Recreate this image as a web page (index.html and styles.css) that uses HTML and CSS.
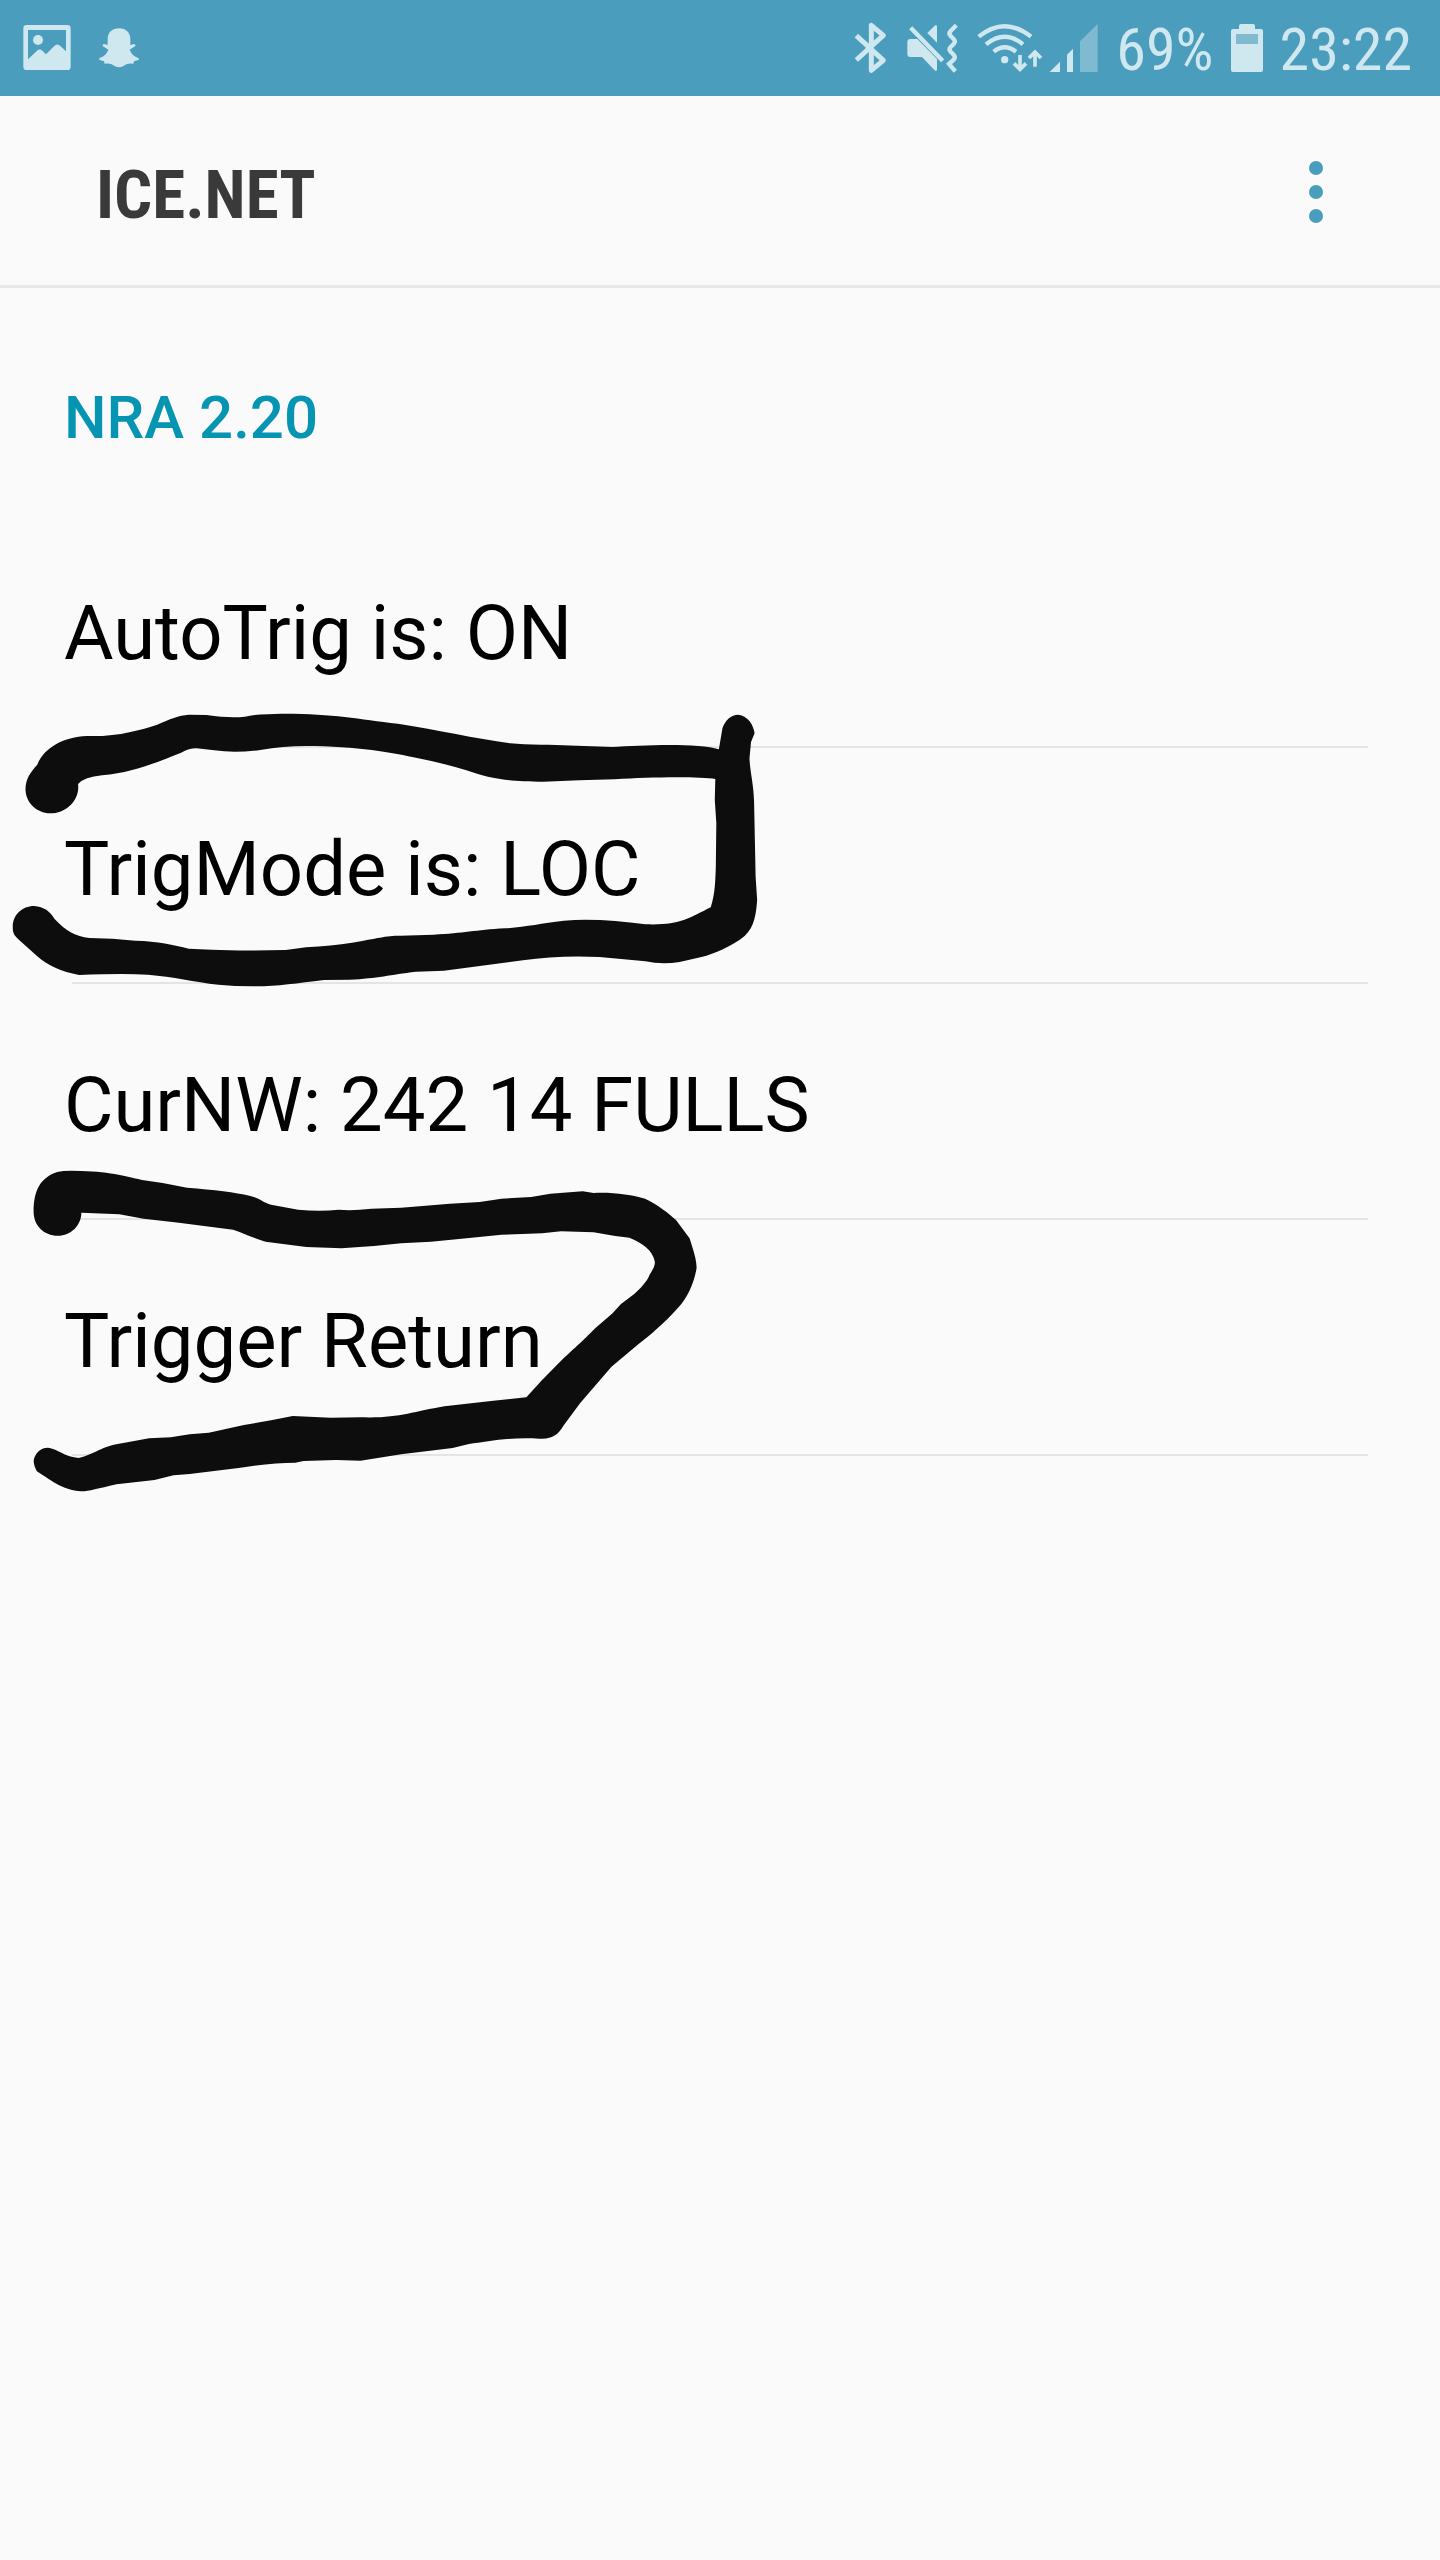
FILE: index.html
```html
<!DOCTYPE html>
<html lang="en">
<head>
<meta charset="utf-8">
<meta name="viewport" content="width=device-width, initial-scale=1">
<title>ICE.NET</title>
<link rel="stylesheet" href="styles.css">
</head>
<body>
<div class="status-bar">
  <div class="status-group notifications">
    <svg class="icon" width="48" height="56" viewBox="69 60 144 168" aria-hidden="true">
      <path fill-rule="evenodd" d="M80 75H202Q212 75 212 85V200Q212 210 202 210H80Q70 210 70 200V85Q70 75 80 75ZM84 90V178L111 152Q119 145 127 152L138 163L163 138Q172 129 181 138L198 154V90Z"/>
      <circle cx="114" cy="120" r="15"/>
    </svg>
    <svg class="icon" width="42" height="56" viewBox="294 60 126 168" aria-hidden="true">
      <path d="M357 85C378 85 391 98 391 118V135L402 132Q408 133 406 138L389 149C394 162 402 170 415 174Q419 178 415 180L402 184L400 191Q388 189 379 193C370 199 365 202 357 202C349 202 344 199 335 193Q326 189 314 191L312 184L299 180Q295 178 299 174C312 170 320 162 325 149L308 138Q306 133 312 132L323 135V118C323 98 336 85 357 85Z"/>
    </svg>
  </div>
  <div class="status-group">
    <svg class="icon" width="35" height="56" viewBox="39 60 105 168" aria-hidden="true">
      <path class="line bluetooth" d="M46 107L127 181L91 211V76L127 106L46 180"/>
    </svg>
    <svg class="icon" width="54" height="56" viewBox="198 60 162 168" aria-hidden="true">
      <path d="M232 117H211Q202 117 202 126V162Q202 171 211 171H246L283 210Q291 216 291 208V177Z"/>
      <path d="M262 99L284 77Q291 72 291 80V128Z"/>
      <path class="line slash" d="M212 83L308 182"/>
      <path class="line wave" d="M349 76L332 93Q325 101 332 108L341 117Q348 124 341 132L332 141Q325 148 332 155L341 164Q348 172 341 179L327 192L346 214"/>
    </svg>
    <div class="network">
      <svg class="icon" width="66" height="56" viewBox="414 60 198 168" aria-hidden="true">
        <path class="line wifi" d="M419 110Q497 47 576 110M441 133Q497 87 552 133M464 155Q497 129 531 155"/>
        <circle cx="497" cy="179" r="11"/>
        <path class="line arrow" d="M543 165V207M525 190L543 208L561 190M588 200V157M570 174L588 156L606 174"/>
      </svg>
      <svg class="icon" width="50" height="56" viewBox="630 60 150 168" aria-hidden="true">
        <path d="M632 216L663 185V216ZM684 216V164L702 146V216Z"/>
        <path class="dim" d="M723 216V124L776 72V216Z"/>
      </svg>
    </div>
    <span class="status-text">69%</span>
    <svg class="icon" width="32" height="56" viewBox="393 60 96 168" aria-hidden="true">
      <path fill-rule="evenodd" d="M417 87V78Q417 72 423 72H459Q465 72 465 78V87H483Q489 87 489 93V210Q489 216 483 216H399Q393 216 393 210V93Q393 87 399 87ZM408 102V132H474V102Z"/>
      <path class="dim" d="M408 102H474V132H408Z"/>
    </svg>
    <time class="status-text">23:22</time>
  </div>
</div>
<header class="app-bar">
  <h1 class="app-title">ICE.NET</h1>
  <button class="menu-button" type="button" aria-label="More options">
    <svg width="16" height="64" viewBox="0 0 16 64" aria-hidden="true">
      <circle cx="8" cy="8" r="7"/><circle cx="8" cy="32" r="7"/><circle cx="8" cy="56" r="7"/>
    </svg>
  </button>
</header>
<main class="content">
  <h2 class="section-title">NRA 2.20</h2>
  <ul class="options">
    <li class="option"><button class="option-button" type="button">AutoTrig is: ON</button></li>
    <li class="option"><button class="option-button" type="button">TrigMode is: LOC</button></li>
    <li class="option"><button class="option-button" type="button">CurNW: 242 14 FULLS</button></li>
    <li class="option"><button class="option-button" type="button">Trigger Return</button></li>
  </ul>
  <svg class="marker marker-mode" width="800" height="320" viewBox="0 0 1568 960" preserveAspectRatio="none" aria-hidden="true">
    <path d="M98 370C72 370 50 338 50 298C50 265 61 245 73 224C87 172 125 141 170 138C230 141 275 120 308 104C333 87 350 76 370 74L405 75Q450 85 480 80C500 72 530 73 550 71C650 70 700 87 780 101C860 120 930 145 1000 160Q1030 165 1075 164L1200 171C1260 165 1370 158 1409 178L1416 115C1421 91 1433 74 1447 74C1466 77 1477 105 1479 130L1472 156L1469 205C1470 245 1477 280 1478 335L1481 560L1484 630C1482 670 1479 710 1460 737C1435 770 1395 793 1377 800L1332 816Q1297 824 1265 814L1175 801C1120 797 1070 801 1025 811L870 842L815 845C765 854 740 865 685 869L635 870C580 880 540 890 495 889Q460 889 428 884C380 876 340 860 290 854Q240 850 155 855C120 846 93 825 73 799L37 749C27 735 25 728 25 710C25 675 43 648 67 648C86 650 98 664 107 687C130 725 148 738 175 744Q220 744 265 752C310 754 340 764 370 776L415 779Q470 783 560 780L600 772Q650 767 690 758C740 745 755 737 785 737L850 734C910 730 930 720 990 715C1030 711 1060 700 1105 692C1160 685 1210 693 1265 703C1330 707 1350 685 1393 652C1402 610 1402 570 1403 530L1404 400L1401 330L1402 267C1375 260 1280 260 1205 268L1135 271L1065 275C1000 275 965 265 935 251C895 231 860 217 820 205C770 188 700 168 600 168Q555 168 510 180Q460 190 420 181L385 175Q370 175 355 188C300 222 260 247 200 256Q165 261 153 282C157 330 130 370 98 370Z"/>
  </svg>
  <svg class="marker marker-return" width="850" height="520" viewBox="0 0 1568 1560" preserveAspectRatio="none" aria-hidden="true">
    <path d="M107 707C80 707 62 675 62 635C62 570 75 532 106 516Q120 510 150 513C205 515 240 532 265 541L300 549L345 563C395 569 435 577 460 587C480 595 485 608 500 614L550 629Q590 635 625 629Q650 633 685 626L740 623L830 611L885 606L925 596L980 591L1015 581L1075 574L1095 579C1130 576 1165 585 1190 596C1212 612 1235 642 1247 660L1272 715C1280 755 1285 780 1285 805C1280 850 1268 895 1250 925C1225 970 1200 1005 1178 1032L1128 1100L1070 1210L1040 1276C1030 1305 1017 1319 995 1316C940 1310 900 1325 865 1332L835 1344L740 1363L665 1382L620 1380L560 1383L545 1388Q500 1388 440 1404L350 1422L320 1426L285 1440L215 1453C180 1466 165 1474 150 1474C115 1472 90 1436 68 1414Q60 1390 63 1375C67 1356 76 1343 88 1343C107 1347 115 1367 145 1374C175 1363 185 1338 230 1328L275 1315L315 1312L350 1303L385 1298L450 1275L500 1261L540 1248L610 1253L665 1252C735 1256 760 1235 820 1219L910 1202L971 1192L1000 1140L1035 1082C1070 1030 1080 1015 1098 985L1130 940L1145 913L1170 882C1190 853 1196 835 1198 825Q1209 798 1208 785C1204 750 1184 728 1161 713L1135 708L1095 697L1035 694L1000 700L925 704L870 713L795 725L740 730L690 738L630 745L565 741L490 725C465 713 450 699 430 689L380 679L330 668L265 656L220 643L150 638C150 677 130 707 107 707Z"/>
  </svg>
</main>
</body>
</html>
```
FILE: styles.css
```css
* {
  box-sizing: border-box;
}

body {
  margin: 0;
  min-height: 100vh;
  background: #fafafa;
  color: #000;
  font-family: Roboto, "Liberation Sans", sans-serif;
}

.status-bar {
  display: flex;
  align-items: center;
  justify-content: space-between;
  height: 96px;
  padding: 0 28px 0 23px;
  background: #4a9dbd;
  color: #cfe7ef;
}

.status-group,
.network {
  display: flex;
  align-items: center;
  gap: 17px;
}

.notifications {
  gap: 27px;
}

.network {
  gap: 6px;
}

.icon {
  display: block;
  flex: none;
  fill: currentColor;
}

.line {
  fill: none;
  stroke: currentColor;
}

.bluetooth {
  stroke-width: 15;
  stroke-linejoin: round;
}

.slash,
.wave,
.wifi {
  stroke-width: 13;
}

.arrow {
  stroke-width: 11;
}

.dim {
  opacity: 0.4;
}

.status-text {
  padding-top: 4px;
  font-family: "Roboto Condensed", "Liberation Sans Narrow", Roboto, sans-serif;
  font-size: 60px;
  line-height: 92px;
}

.app-bar {
  display: flex;
  align-items: center;
  justify-content: space-between;
  height: 192px;
  padding: 2px 84px 0 96px;
  border-bottom: 3px solid #e8e8e8;
}

.app-title {
  margin: 0;
  padding-top: 6px;
  color: #3a3a3a;
  font-family: "Roboto Condensed", "Liberation Sans Narrow", Roboto, sans-serif;
  font-size: 67px;
  font-weight: 700;
  line-height: 80px;
}

.menu-button {
  display: flex;
  align-items: center;
  justify-content: center;
  width: 80px;
  height: 96px;
  padding: 0;
  border: 0;
  background: none;
  fill: #4a9dbd;
}

.content {
  position: relative;
  padding-top: 92px;
}

.section-title {
  margin: 0 64px 56px;
  color: #0595b2;
  font-size: 60px;
  font-weight: 500;
  line-height: 76px;
}

.options {
  margin: 0;
  padding: 0;
  list-style: none;
}

.option {
  padding: 0 72px 0 64px;
}

.option-button {
  display: block;
  width: 100%;
  height: 236px;
  padding: 6px 0 0;
  border: 0;
  background: linear-gradient(#e4e4e4, #e4e4e4) 8px 100% / 100% 2px no-repeat;
  color: inherit;
  font: inherit;
  font-size: 76px;
  line-height: 90px;
  text-align: left;
}

.marker {
  position: absolute;
  left: 0;
  fill: #0d0d0d;
  pointer-events: none;
}

.marker-mode {
  top: 402px;
}

.marker-return {
  top: 712px;
}
```
